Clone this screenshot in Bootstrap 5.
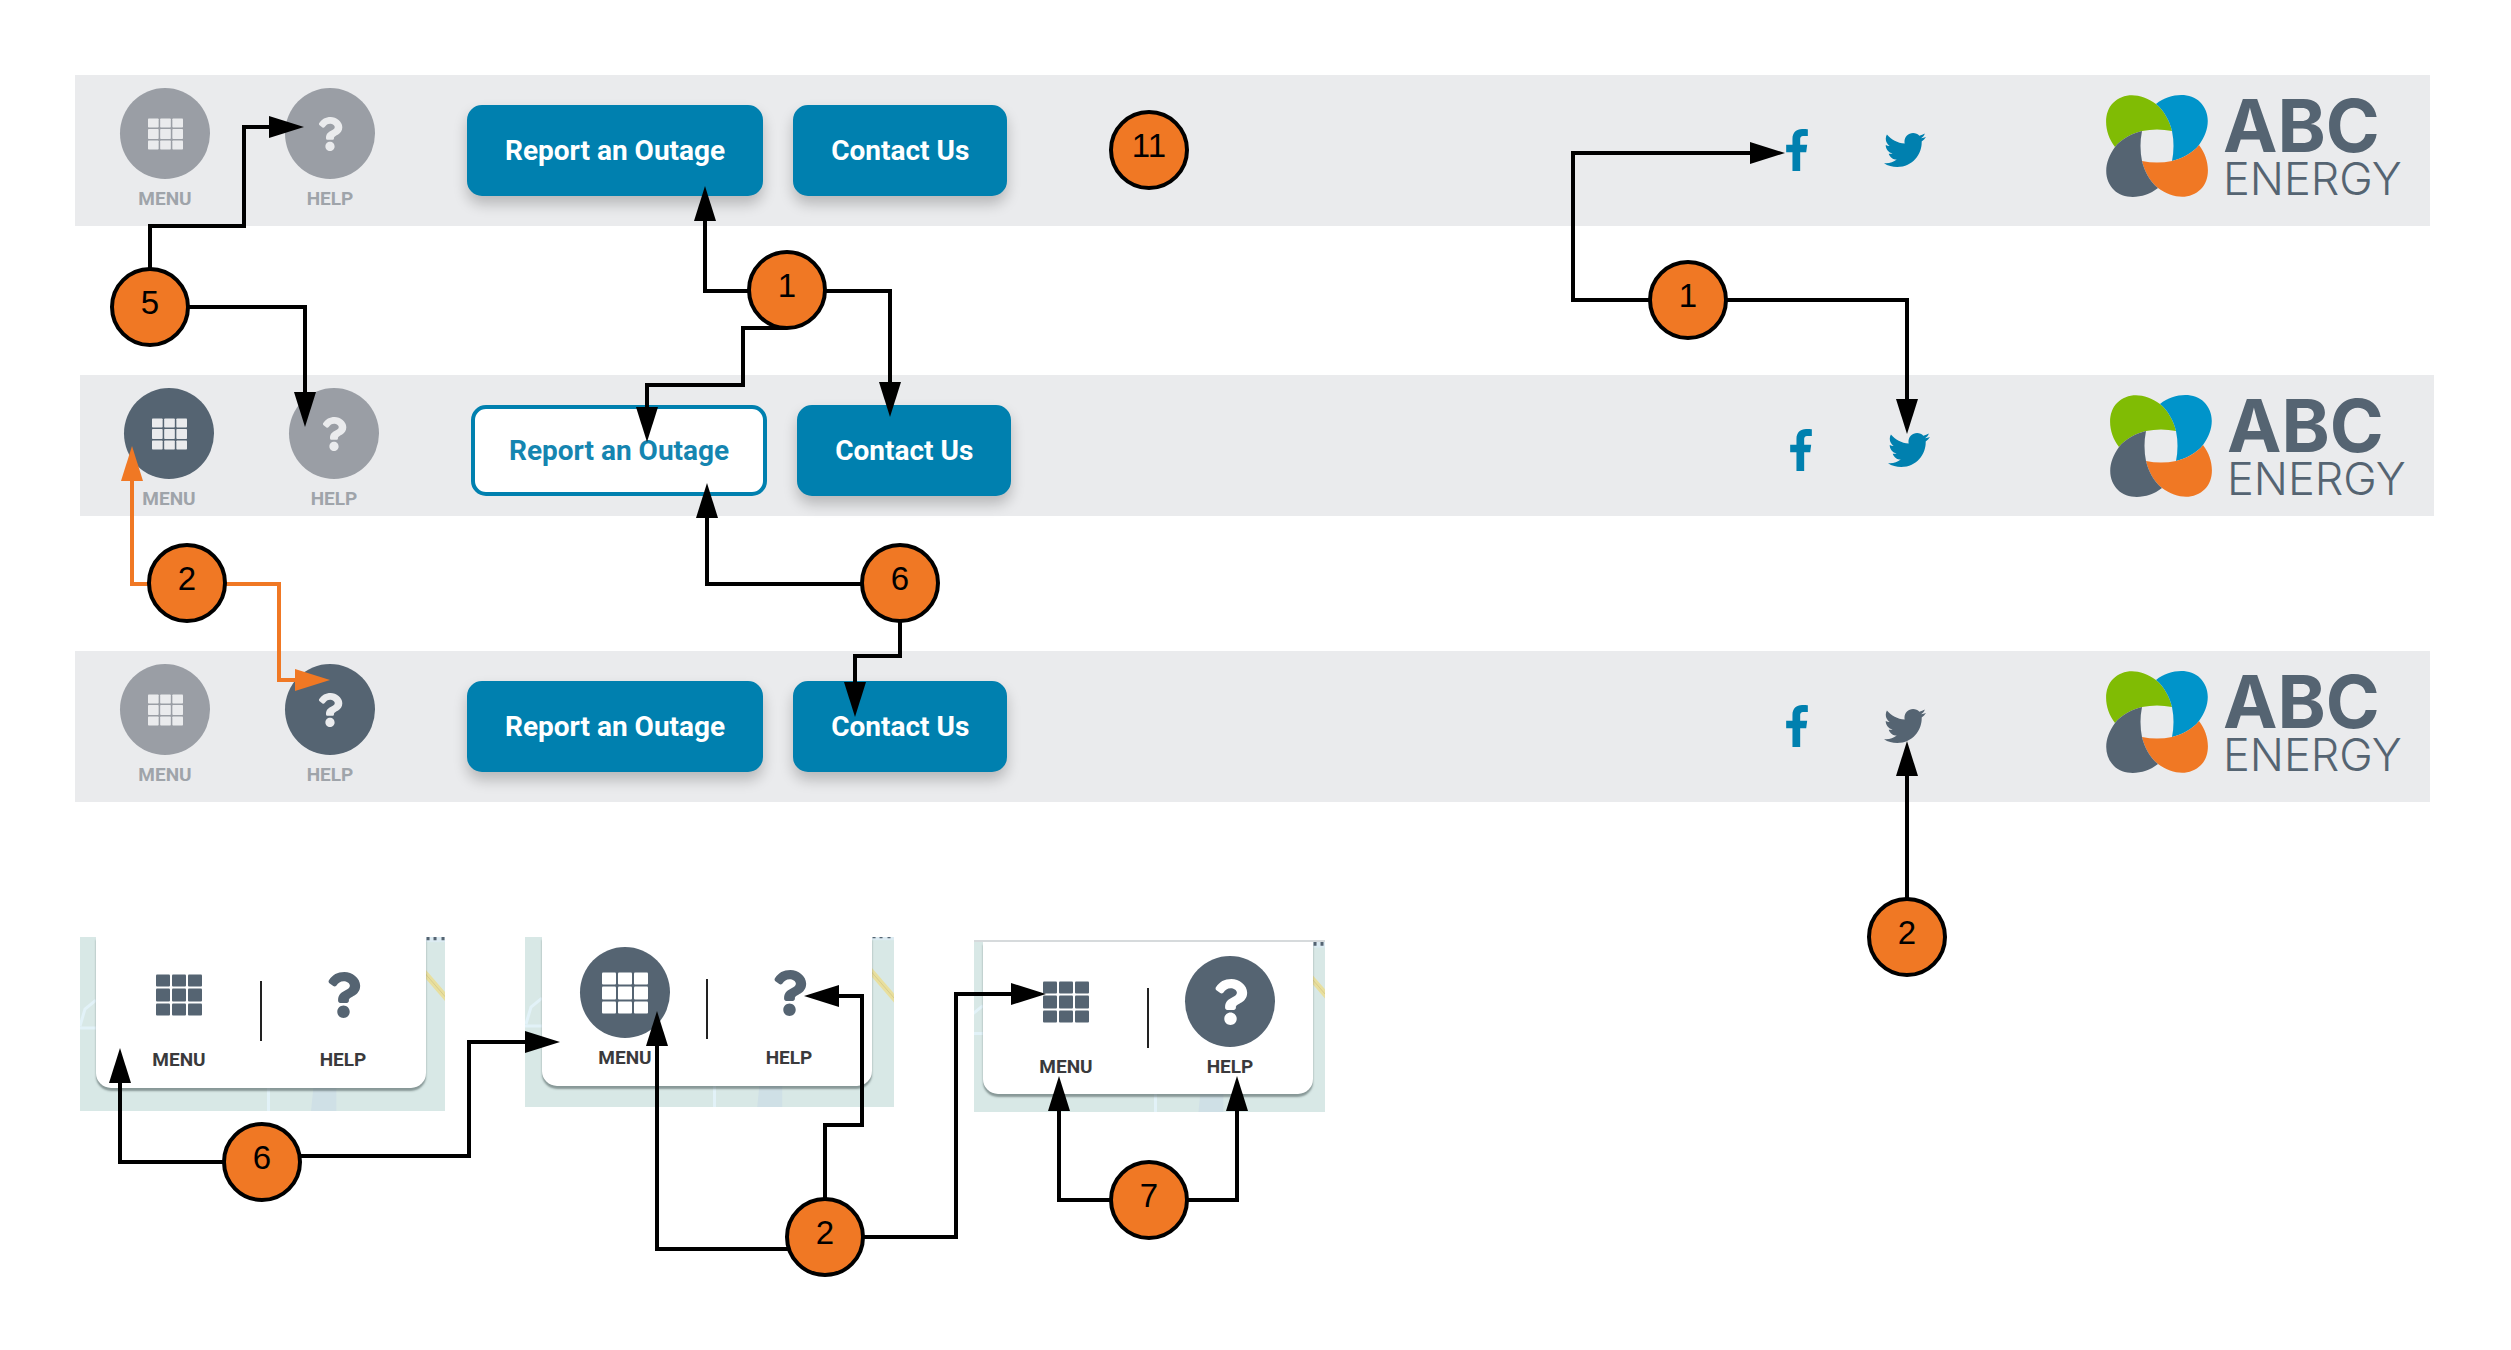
<!DOCTYPE html>
<html lang="en">
<head>
<meta charset="utf-8">
<meta name="viewport" content="width=device-width, initial-scale=1">
<title>ABC Energy – header states</title>
<link href="https://cdn.jsdelivr.net/npm/bootstrap@5.3.0/dist/css/bootstrap.min.css" rel="stylesheet">
<style>
:root{--slate:#556472;--grey:#9a9ea5;--brand:#0080af;--orange:#f07824;}
body{font-family:Roboto,"Liberation Sans",sans-serif;background:#fff;min-height:1350px;overflow-x:hidden}
.board{padding:75px 0 0}
.topbar{background:#eaebed;margin:0 81px 0 75px;padding:13px 28px 17px 45px}
.topbar.state-b{margin:149px 77px 135px 80px;padding-left:44px;padding-bottom:7px}
.tiles{gap:75px;margin-right:92px}
.tile{width:90px;padding:0;border:0;background:none;gap:10px;color:#9fa4aa;font-size:19px;line-height:20px;font-weight:700}
.disc{width:90px;height:91px;color:#eaebed}
.disc svg{height:34px}
.disc.muted{background:var(--grey)}
.disc.solid{background:var(--slate)}
.actions{gap:30px;margin-top:17px}
.actions .btn{font-size:28px;line-height:32px;font-weight:700;padding:26px 34px 25px;border:4px solid var(--brand);border-radius:15px}
.btn-fill{background:var(--brand);color:#fff;box-shadow:0 8px 14px rgba(0,0,0,.22)}
.btn-line{background:#fff;color:#1585b0}
.btn-fill:hover{background:#006e97;color:#fff}
.btn-line:hover{background:#eef8fc;color:var(--brand)}
.social{gap:76px;margin-top:41px;margin-right:180px}
.social a{color:var(--brand);line-height:0}
.social a.pressed{color:var(--slate)}
.brand-logo{gap:15px;margin-top:7px;color:var(--slate);font-family:Inter,"Liberation Sans",sans-serif;text-decoration:none}
.brand-words{width:179px}
.brand-a{font-size:73px;line-height:62px;font-weight:700}
.brand-b{font-size:45px;line-height:44px;font-weight:300}
.popups{gap:80px;margin:135px 0 0 80px}
.mapbit{background:#d8e8e6}
.mapbit.m1{padding:0 19px 23px 16px}
.mapbit.m2{padding:0 22px 21px 17px}
.mapbit.m3{padding:0 12px 18px 9px;border-top:2px solid #d6dadc;margin-top:3px}
.pop{background:#fff;border-radius:0 0 15px 15px;padding:12px 38px 18px;gap:36px;box-shadow:0 3px 2px rgba(70,85,85,.55)}
.m2 .pop{padding-top:10px}
.m3 .pop{padding-top:14px;padding-bottom:17px}
.pop .tile{color:#3a3a3c}
.pop .disc{color:var(--slate)}
.pop .disc.solid{color:#fff}
.pop .disc svg{height:46px}
.rule{width:2px;height:60px;margin-top:32px;background:#222}
.notes{width:2511px;height:1350px;pointer-events:none}
.notes text{font-family:"Liberation Sans",Arial,sans-serif;font-size:33px;text-anchor:middle}
.notes circle{fill:var(--orange);stroke:#000;stroke-width:4}
</style>
</head>
<body class="position-relative">
<svg width="0" height="0" class="position-absolute" aria-hidden="true">
  <symbol id="grid" viewBox="0 0 46 41"><g fill="currentColor"><rect width="14" height="12" rx="1"/><rect x="16" width="14" height="12" rx="1"/><rect x="32" width="14" height="12" rx="1"/><rect y="14" width="14" height="13" rx="1"/><rect x="16" y="14" width="14" height="13" rx="1"/><rect x="32" y="14" width="14" height="13" rx="1"/><rect y="29" width="14" height="12" rx="1"/><rect x="16" y="29" width="14" height="12" rx="1"/><rect x="32" y="29" width="14" height="12" rx="1"/></g></symbol>
  <symbol id="question" viewBox="0 0 384 512"><path fill="currentColor" d="M202.021 0C122.202 0 70.503 32.703 29.914 91.026c-7.363 10.58-5.093 25.086 5.178 32.874l43.138 32.709c10.373 7.865 25.132 6.026 33.253-4.148 25.049-31.381 43.63-49.449 82.757-49.449 30.764 0 68.816 19.799 68.816 49.631 0 22.552-18.617 34.134-48.993 51.164-35.423 19.86-82.299 44.576-82.299 106.405V320c0 13.255 10.745 24 24 24h72.471c13.255 0 24-10.745 24-24v-5.773c0-42.86 125.268-44.645 125.268-160.627C377.504 66.256 286.902 0 202.021 0zM192 373.459c-38.196 0-69.271 31.075-69.271 69.271 0 38.195 31.075 69.27 69.271 69.27s69.271-31.075 69.271-69.271-31.075-69.27-69.271-69.27z"/></symbol>
  <symbol id="facebook" viewBox="0 0 264 512"><path fill="currentColor" d="M215.8 85H264V3.6C255.7 2.5 227.1 0 193.8 0 124.3 0 76.7 42.4 76.7 120.3V192H0v91h76.7v229h94V283h73.6l11.7-91h-85.3v-62.7c0-26.3 7.3-44.3 45.1-44.3z"/></symbol>
  <symbol id="twitter" viewBox="0 0 512 512"><path fill="currentColor" d="M459.37 151.716c.325 4.548.325 9.097.325 13.645 0 138.72-105.583 298.558-298.558 298.558-59.452 0-114.68-17.219-161.137-47.106 8.447.974 16.568 1.299 25.34 1.299 49.055 0 94.213-16.568 130.274-44.832-46.132-.975-84.792-31.188-98.112-72.772 6.498.974 12.995 1.624 19.818 1.624 9.421 0 18.843-1.3 27.614-3.573-48.081-9.747-84.143-51.98-84.143-102.985v-1.299c13.969 7.797 30.214 12.67 47.431 13.319-28.264-18.843-46.781-51.005-46.781-87.391 0-19.492 5.197-37.36 14.294-52.954 51.655 63.675 129.3 105.258 216.365 109.807-1.624-7.797-2.599-15.918-2.599-24.04 0-57.828 46.782-104.934 104.934-104.934 30.213 0 57.502 12.67 76.67 33.137 23.715-4.548 46.456-13.32 66.599-25.34-7.798 24.366-24.366 44.833-46.132 57.827 21.117-2.273 41.584-8.122 60.426-16.243-14.292 20.791-32.161 39.308-52.628 54.253z"/></symbol>
  <symbol id="petals" viewBox="0 0 102 102">
    <defs><path id="petal" d="M9 52C-2 38-3 18 7 8C18-3 35-2 50 9C58 15 64 27 66 36Q51 33 36 36C27 38 15 44 9 52Z"/></defs>
    <use href="#petal" fill="#80bc04"/><use href="#petal" fill="#0094ca" transform="rotate(90 51 51)"/><use href="#petal" fill="#f07824" transform="rotate(180 51 51)"/><use href="#petal" fill="#556472" transform="rotate(270 51 51)"/>
  </symbol>
  <!-- street fragment; origin is the popup's lower left corner -->
  <g id="streets" fill="none">
    <path d="M-20-60H0M-16-62L-11-79L0-88M173 0V30" stroke="#e2f2f8" stroke-width="3"/>
    <path d="M218 0H241V30H215Z" fill="#cfe0e6"/>
    <path d="M328-153H360V-146H328Z" fill="#dcebf2"/>
    <path d="M333-153V-148M340-153V-148M348-153V-148" stroke="#556472" stroke-width="3"/>
    <path d="M328-117L360-80" stroke="#e8df9e" stroke-width="6"/>
    <path d="M328-117L360-80" stroke="#d8cc8c" stroke-width="1"/>
  </g>
</svg>

<main class="board">
  <header class="topbar d-flex align-items-start">
    <nav class="tiles d-flex" aria-label="Main">
      <button type="button" class="tile d-flex flex-column align-items-center"><span class="disc muted rounded-circle d-flex align-items-center justify-content-center"><svg width="35" height="31" aria-hidden="true"><use href="#grid"/></svg></span>MENU</button>
      <button type="button" class="tile d-flex flex-column align-items-center"><span class="disc muted rounded-circle d-flex align-items-center justify-content-center"><svg width="26" aria-hidden="true"><use href="#question"/></svg></span>HELP</button>
    </nav>
    <div class="actions d-flex"><button type="button" class="btn btn-fill">Report an Outage</button><button type="button" class="btn btn-fill">Contact Us</button></div>
    <div class="social d-flex ms-auto"><a href="#" aria-label="Facebook"><svg width="22" height="42"><use href="#facebook"/></svg></a><a href="#" aria-label="Twitter"><svg width="42" height="42"><use href="#twitter"/></svg></a></div>
    <a href="#" class="brand-logo d-flex"><svg width="102" height="102" aria-hidden="true"><use href="#petals"/></svg><span class="brand-words d-flex flex-column"><span class="brand-a">ABC</span><span class="brand-b">ENERGY</span></span></a>
  </header>

  <header class="topbar state-b d-flex align-items-start">
    <nav class="tiles d-flex" aria-label="Main, menu pressed">
      <button type="button" class="tile d-flex flex-column align-items-center"><span class="disc solid rounded-circle d-flex align-items-center justify-content-center"><svg width="35" height="31" aria-hidden="true"><use href="#grid"/></svg></span>MENU</button>
      <button type="button" class="tile d-flex flex-column align-items-center"><span class="disc muted rounded-circle d-flex align-items-center justify-content-center"><svg width="26" aria-hidden="true"><use href="#question"/></svg></span>HELP</button>
    </nav>
    <div class="actions d-flex"><button type="button" class="btn btn-line">Report an Outage</button><button type="button" class="btn btn-fill">Contact Us</button></div>
    <div class="social d-flex ms-auto"><a href="#" aria-label="Facebook"><svg width="22" height="42"><use href="#facebook"/></svg></a><a href="#" aria-label="Twitter"><svg width="42" height="42"><use href="#twitter"/></svg></a></div>
    <a href="#" class="brand-logo d-flex"><svg width="102" height="102" aria-hidden="true"><use href="#petals"/></svg><span class="brand-words d-flex flex-column"><span class="brand-a">ABC</span><span class="brand-b">ENERGY</span></span></a>
  </header>

  <header class="topbar d-flex align-items-start">
    <nav class="tiles d-flex" aria-label="Main, help pressed">
      <button type="button" class="tile d-flex flex-column align-items-center"><span class="disc muted rounded-circle d-flex align-items-center justify-content-center"><svg width="35" height="31" aria-hidden="true"><use href="#grid"/></svg></span>MENU</button>
      <button type="button" class="tile d-flex flex-column align-items-center"><span class="disc solid rounded-circle d-flex align-items-center justify-content-center"><svg width="26" aria-hidden="true"><use href="#question"/></svg></span>HELP</button>
    </nav>
    <div class="actions d-flex"><button type="button" class="btn btn-fill">Report an Outage</button><button type="button" class="btn btn-fill">Contact Us</button></div>
    <div class="social d-flex ms-auto"><a href="#" aria-label="Facebook"><svg width="22" height="42"><use href="#facebook"/></svg></a><a href="#" class="pressed" aria-label="Twitter"><svg width="42" height="42"><use href="#twitter"/></svg></a></div>
    <a href="#" class="brand-logo d-flex"><svg width="102" height="102" aria-hidden="true"><use href="#petals"/></svg><span class="brand-words d-flex flex-column"><span class="brand-a">ABC</span><span class="brand-b">ENERGY</span></span></a>
  </header>

  <section class="popups d-flex align-items-start">
    <div class="mapbit m1 position-relative overflow-hidden">
      <svg class="position-absolute top-0 start-0 w-100 h-100" viewBox="-16 -151 366 174" aria-hidden="true"><use href="#streets"/></svg>
      <div class="pop d-flex align-items-start position-relative">
        <button type="button" class="tile d-flex flex-column align-items-center"><span class="disc rounded-circle d-flex align-items-center justify-content-center"><svg width="46" aria-hidden="true"><use href="#grid"/></svg></span>MENU</button>
        <span class="rule"></span>
        <button type="button" class="tile d-flex flex-column align-items-center"><span class="disc rounded-circle d-flex align-items-center justify-content-center"><svg width="35" aria-hidden="true"><use href="#question"/></svg></span>HELP</button>
      </div>
    </div>
    <div class="mapbit m2 position-relative overflow-hidden">
      <svg class="position-absolute top-0 start-0 w-100 h-100" viewBox="-17 -149 370 170" aria-hidden="true"><use href="#streets"/></svg>
      <div class="pop d-flex align-items-start position-relative">
        <button type="button" class="tile d-flex flex-column align-items-center"><span class="disc solid rounded-circle d-flex align-items-center justify-content-center"><svg width="46" aria-hidden="true"><use href="#grid"/></svg></span>MENU</button>
        <span class="rule"></span>
        <button type="button" class="tile d-flex flex-column align-items-center"><span class="disc rounded-circle d-flex align-items-center justify-content-center"><svg width="35" aria-hidden="true"><use href="#question"/></svg></span>HELP</button>
      </div>
    </div>
    <div class="mapbit m3 position-relative overflow-hidden">
      <svg class="position-absolute top-0 start-0 w-100 h-100" viewBox="-9 -151 352 169" aria-hidden="true"><use href="#streets"/></svg>
      <div class="pop d-flex align-items-start position-relative">
        <button type="button" class="tile d-flex flex-column align-items-center"><span class="disc rounded-circle d-flex align-items-center justify-content-center"><svg width="46" aria-hidden="true"><use href="#grid"/></svg></span>MENU</button>
        <span class="rule"></span>
        <button type="button" class="tile d-flex flex-column align-items-center"><span class="disc solid rounded-circle d-flex align-items-center justify-content-center"><svg width="35" aria-hidden="true"><use href="#question"/></svg></span>HELP</button>
      </div>
    </div>
  </section>
</main>

<!-- numbered callouts and their connectors -->
<svg class="notes position-absolute top-0 start-0" viewBox="0 0 2511 1350">
  <defs>
    <marker id="tip" markerUnits="userSpaceOnUse" markerWidth="36" markerHeight="24" refX="1" refY="11" orient="auto"><path d="M0 0L35 11L0 22Z"/></marker>
    <marker id="tip-orange" markerUnits="userSpaceOnUse" markerWidth="36" markerHeight="24" refX="1" refY="11" orient="auto"><path d="M0 0L35 11L0 22Z" fill="#f07824"/></marker>
  </defs>
  <g fill="none" stroke="#000" stroke-width="4">
    <path marker-end="url(#tip)" d="M150 270V226H244V127H270"/>
    <path marker-end="url(#tip)" d="M186 307H305V393"/>
    <path marker-end="url(#tip)" d="M750 291H705V220"/>
    <path marker-end="url(#tip)" d="M822 291H890V383"/>
    <path marker-end="url(#tip)" d="M787 328H743V385H647V408"/>
    <path marker-end="url(#tip)" d="M1652 300H1573V153H1751"/>
    <path marker-end="url(#tip)" d="M1723 300H1907V400"/>
    <path marker-end="url(#tip)" d="M863 584H707V517"/>
    <path marker-end="url(#tip)" d="M900 620V656H855V683"/>
    <path marker-end="url(#tip)" d="M1907 902V775"/>
    <path marker-end="url(#tip)" d="M226 1162H120V1082"/>
    <path marker-end="url(#tip)" d="M299 1156H469V1042H526"/>
    <path marker-end="url(#tip)" d="M790 1249H657V1045"/>
    <path marker-end="url(#tip)" d="M825 1200V1125H862V996H838"/>
    <path marker-end="url(#tip)" d="M861 1237H956V994H1012"/>
    <path marker-end="url(#tip)" d="M1113 1200H1059V1110"/>
    <path marker-end="url(#tip)" d="M1185 1200H1237V1110"/>
  </g>
  <g fill="none" stroke="#f07824" stroke-width="4">
    <path marker-end="url(#tip-orange)" d="M152 584H132V480"/>
    <path marker-end="url(#tip-orange)" d="M224 584H279V680H296"/>
  </g>
  <circle cx="1149" cy="150" r="38"/><text x="1149" y="157">11</text>
  <circle cx="150" cy="307" r="38"/><text x="150" y="314">5</text>
  <circle cx="787" cy="290" r="38"/><text x="787" y="297">1</text>
  <circle cx="1688" cy="300" r="38"/><text x="1688" y="307">1</text>
  <circle cx="187" cy="583" r="38"/><text x="187" y="590">2</text>
  <circle cx="900" cy="583" r="38"/><text x="900" y="590">6</text>
  <circle cx="1907" cy="937" r="38"/><text x="1907" y="944">2</text>
  <circle cx="262" cy="1162" r="38"/><text x="262" y="1169">6</text>
  <circle cx="825" cy="1237" r="38"/><text x="825" y="1244">2</text>
  <circle cx="1149" cy="1200" r="38"/><text x="1149" y="1207">7</text>
</svg>
<script src="https://cdn.jsdelivr.net/npm/bootstrap@5.3.0/dist/js/bootstrap.bundle.min.js"></script>
</body>
</html>
